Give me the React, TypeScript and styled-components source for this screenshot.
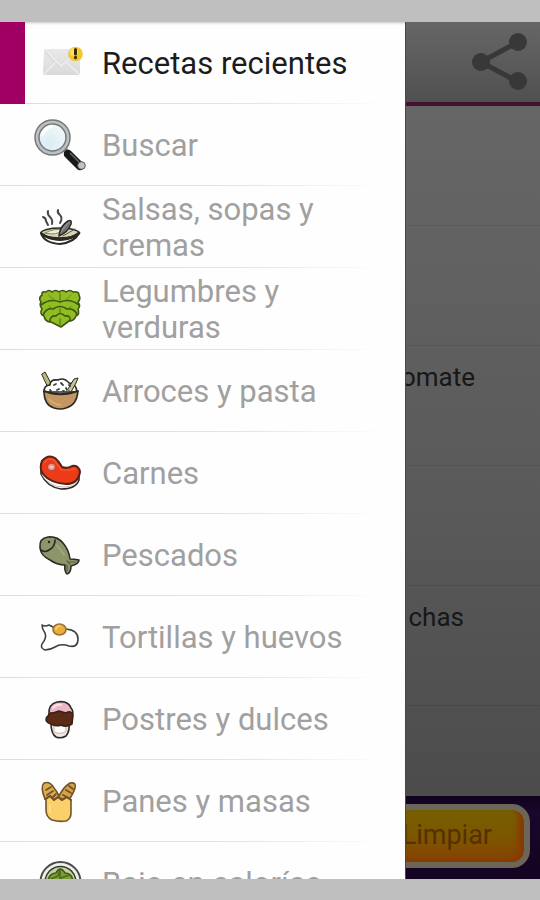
import React from "react";
import styled, { createGlobalStyle, css } from "styled-components";

const GlobalStyle = createGlobalStyle`
  * { box-sizing: border-box; }
  body { margin: 0; background: #bfbfbf; }
`;

const Screen = styled.div`
  display: flex;
  height: 100vh;
  padding: 22px 0 21px;
  overflow: hidden;
  background: #bfbfbf;
  font-family: Roboto, "Liberation Sans", sans-serif;
`;

const Drawer = styled.nav`
  flex: 0 0 75%;
  overflow: hidden;
  background: #fefefe;
  box-shadow: inset 0 3px 3px -2px #c4c4c4;
`;

const Menu = styled.ul`
  margin: 0;
  padding: 0;
  list-style: none;
`;

const MenuItem = styled.li<{ $active?: boolean }>`
  height: 82px;
  padding-bottom: 1px;
  background:
    linear-gradient(to right, #dedede 0%, #e4e4e4 60%, #fefefe 95%) bottom / 100% 1px no-repeat;
  ${({ $active }) =>
    $active &&
    css`
      border-left: 25px solid #a00062;
    `}
`;

const MenuButton = styled.button<{ $active?: boolean }>`
  display: flex;
  align-items: center;
  gap: 12px;
  width: 100%;
  height: 100%;
  padding: 0 24px 0 ${({ $active }) => ($active ? "5px" : "30px")};
  border: 0;
  background: none;
  color: ${({ $active }) => ($active ? "#1c1c1c" : "#a0a0a0")};
  font: 400 31px/36px Roboto, "Liberation Sans", sans-serif;
  text-align: left;
  cursor: pointer;
`;

const Label = styled.span`
  padding-top: 2px;
`;

const Icon = styled.svg`
  flex: none;
  width: 60px;
  height: 60px;
`;

const Page = styled.main`
  display: flex;
  flex: 1;
  flex-direction: column;
  min-width: 0;
  overflow: hidden;
  border-left: 1px solid #484848;
  background: linear-gradient(#666 10%, #5a5a5a 55%, #4c4c4c 90%);
`;

const Header = styled.header`
  display: flex;
  flex: none;
  align-items: center;
  justify-content: flex-end;
  height: 84px;
  padding-right: 9px;
  border-bottom: 4px solid #42122f;
  background: linear-gradient(#666, #505050);
`;

const ShareButton = styled.button`
  display: flex;
  padding: 0;
  border: 0;
  background: none;
  cursor: pointer;
`;

const Recipes = styled.ul`
  flex: 1;
  min-height: 0;
  margin: 0;
  padding: 0;
  overflow: hidden;
  list-style: none;
`;

const Recipe = styled.li<{ $inset?: number }>`
  display: flex;
  justify-content: flex-end;
  height: 120px;
  padding: 15px ${({ $inset = 0 }) => $inset}px 0 0;
  border-bottom: 1px solid rgba(0, 0, 0, 0.09);
  color: #171717;
  font-size: 26px;
  line-height: 32px;
  white-space: nowrap;
`;

const Footer = styled.footer`
  display: flex;
  flex: none;
  align-items: center;
  justify-content: flex-end;
  height: 83px;
  padding: 0 10px 3px 0;
  background: linear-gradient(#10031d, #1b062c 20%, #140320);
`;

const ClearButton = styled.button`
  flex: none;
  width: 200px;
  height: 64px;
  padding: 0 32px 2px 0;
  border: 6px solid #6b6657;
  border-radius: 18px;
  background: linear-gradient(#756000, #7c5600 50%, #874300);
  box-shadow: inset -6px -3px 5px #873c00;
  color: #553000;
  font: 400 27px/32px Roboto, "Liberation Sans", sans-serif;
  text-align: right;
  cursor: pointer;
`;

const line = {
  stroke: "#2c2a24",
  strokeWidth: 1.6,
  strokeLinecap: "round" as const,
  strokeLinejoin: "round" as const,
};

const EnvelopeArt = () => (
  <>
    <defs>
      <linearGradient id="paper" x2="0" y2="1">
        <stop stopColor="#e9e9e9" />
        <stop offset="1" stopColor="#dadada" />
      </linearGradient>
    </defs>
    <path d="M15 16H48Q50 16 50 18V40Q50 42 48 42H15Q13 42 13 40L14 18Q14 16 15 16Z" fill="url(#paper)" />
    <path d="M15 17L31 33L49 18M14 41L26 29M49 41L36 29" fill="none" stroke="#eeeeee" strokeWidth="1.5" />
    <path d="M15 18Q22 28 30 34" fill="none" stroke="#d2d2d2" />
    <circle cx="45.5" cy="21" r="7.3" fill="#f1c92c" />
    <circle cx="44" cy="19" r="4" fill="#f9df68" />
    <path d="M45.5 16.5V21M45.5 24.3V24.8" stroke="#3b2a00" strokeWidth="3" strokeLinecap="round" />
  </>
);

const MagnifierArt = () => (
  <>
    <defs>
      <radialGradient id="glass" cx=".4" cy=".7" r=".8">
        <stop stopColor="#d9edf4" />
        <stop offset="1" stopColor="#f6fafb" />
      </radialGradient>
    </defs>
    <path d="M34 34L40 40" stroke="#77797a" strokeWidth="5" />
    <path d="M38 39L50 51" stroke="#171919" strokeWidth="8.5" strokeLinecap="round" />
    <path d="M40 38L49 47" stroke="#626566" strokeWidth="1.6" />
    <circle cx="51.5" cy="50.5" r="3.8" fill="#bfc3c3" stroke="#555" />
    <circle cx="22.5" cy="22.5" r="15.5" fill="url(#glass)" stroke="#757879" strokeWidth="5.5" />
    <circle cx="22.5" cy="22.5" r="15.5" fill="none" stroke="#bdc0c1" strokeWidth="2.6" />
    <path d="M12 21Q14 13 22 11" fill="none" stroke="#fff" strokeWidth="3" />
  </>
);

const SoupArt = () => (
  <g {...line}>
    <path d="M13 20Q16 21 16 24Q17 26 18 28M18 14Q17 17 20 20Q23 23 22 27M28 13Q27 16 30 18Q33 21 30 26" fill="none" stroke="#45484a" strokeWidth="2" />
    <path d="M11 36Q14 46 30 47Q45 45 49 36Q43 42 30 43Q17 42 11 36Z" fill="#fff" strokeWidth="2" />
    <ellipse cx="30" cy="36" rx="19" ry="5" fill="#d6d5b5" />
    <path d="M15 36Q24 31 33 33Q27 39 15 36Z" fill="#eeeed6" stroke="#878661" strokeWidth="1" />
    <path d="M29 39Q30 29 38 24Q42 22 41 27Q38 35 29 39Z" fill="#888d8c" />
    <path d="M32 36L39 27M33 39L45 32" stroke="#535857" strokeWidth="1" />
    <path d="M12 37Q18 42 30 42Q42 42 49 36" fill="none" strokeWidth="2.8" />
  </g>
);

const LettuceArt = () => (
  <g {...line} stroke="#3d5714">
    <path
      d="M12 16Q11 12 16 13Q19 10 22 13Q26 10 29 13Q33 10 36 13Q40 10 43 13Q49 12 49 16Q51 20 48 23Q51 27 48 30Q50 35 46 37Q44 42 39 42L31 48L27 46L21 43Q15 43 14 37Q9 35 12 30Q9 26 11 23Q8 19 12 16Z"
      fill="#91bd22"
    />
    <path d="M11 26Q20 19 30 23Q40 19 49 26M13 36Q17 28 23 30Q30 25 37 30Q45 29 47 36M20 43Q20 36 26 37Q30 32 35 37Q41 36 40 42" fill="none" />
    <path d="M30 15V21M30 30V34M30 40V46" fill="none" stroke="#5a7f19" strokeWidth="1.3" />
    <path d="M19 16Q20 19 24 20M41 16Q39 19 36 20M19 27L22 29M42 27L38 29" fill="none" stroke="#76a01a" strokeWidth="1.3" />
  </g>
);

const RiceArt = () => (
  <g {...line}>
    <path d="M12 13L15 11L23 26L19 28Z" fill="#b9b77b" strokeWidth="1" />
    <path d="M14 31Q14 24 20 24Q20 18 28 19Q34 16 39 22Q46 22 47 31Z" fill="#fff" />
    <path d="M38 28L44 18L48 17L46 22L41 31Z" fill="#c5c591" strokeWidth="1" />
    <path d="M14 30Q30 36 48 30Q47 44 36 47Q31 49 24 47Q14 44 14 30Z" fill="#c49662" />
    <path d="M14 30Q30 37 48 30" fill="none" />
    <path d="M24 24L26 23M31 22L33 24M27 29L29 28M36 27L37 29M20 29L21 30M33 30L34 30M39 24L40 25" stroke="#3f4140" strokeWidth="1.8" />
    <path d="M19 38Q23 43 31 44" fill="none" stroke="#d7ad78" />
  </g>
);

const SteakArt = () => (
  <g {...line}>
    <path d="M11 22V31Q17 44 31 46Q46 46 49 37V28L34 31Z" fill="#fff" />
    <path d="M12 18Q18 11 25 15Q29 18 32 24Q37 26 42 23Q49 22 50 29Q48 41 36 41Q20 40 13 31Q9 25 12 18Z" fill="#ed3b17" strokeWidth="2" stroke="#522119" />
    <path d="M14 20Q18 14 24 17Q28 23 32 27Q39 28 45 26" fill="none" stroke="#f8532e" strokeWidth="1.5" />
    <ellipse cx="21.5" cy="24" rx="4.3" ry="4" fill="#ef8977" stroke="#bc493a" />
    <ellipse cx="21.5" cy="24" rx="2" ry="1.6" fill="#f9c5b7" stroke="none" />
    <path d="M12 32Q19 44 34 44Q43 44 47 39" fill="none" stroke="#c7bcb5" strokeWidth="1" />
  </g>
);

const FishArt = () => (
  <g {...line}>
    <path d="M10 23Q9 13 18 12Q27 11 33 18Q39 25 40 34Q44 34 49 35Q49 39 41 41Q41 48 37 49Q34 46 35 40Q27 40 20 35Q11 31 10 23Z" fill="#8d956b" />
    <path d="M11 25Q15 28 19 25Q25 22 25 15" fill="none" strokeWidth="1.7" />
    <circle cx="19" cy="17" r="1.2" fill="#22251b" stroke="none" />
    <path d="M37 36L40 39M40 37L45 37M37 40L37 46" stroke="#565d41" strokeWidth="1.2" />
    <path d="M26 20Q31 24 34 30" fill="none" stroke="#a9af89" strokeWidth="1.2" />
  </g>
);

const EggArt = () => (
  <g {...line} stroke="#3c4042">
    <path d="M12 18Q15 20 19 18Q22 19 24 21Q31 18 36 22Q48 23 48 32Q48 41 39 39Q31 36 25 40Q20 43 15 43Q10 41 12 37Q17 31 15 26Q12 22 12 18Z" fill="#fff" />
    <ellipse cx="29.5" cy="22.5" rx="6.5" ry="5.5" fill="#edad3e" stroke="#986f2e" />
    <path d="M26 22Q27 19 30 19" fill="none" stroke="#ffd176" strokeWidth="1.7" />
  </g>
);

const IceCreamArt = () => (
  <g {...line}>
    <path d="M21 34Q21 45 26 48Q31 50 36 47Q40 42 39 34Z" fill="#f3e5df" />
    <path d="M24 36V43Q31 46 36 42V36" fill="#fff" stroke="#c5b3ad" strokeWidth="1" />
    <path d="M19 26Q18 15 27 13Q38 11 41 19Q44 22 42 28Z" fill="#edb6c8" />
    <path d="M18 27Q20 23 23 24L29 22L36 24Q41 21 43 26L42 35Q36 39 31 36Q27 38 21 35Q17 34 16 31Q16 28 18 27Z" fill="#5c2b17" stroke="#3b2116" />
    <path d="M23 19Q26 15 31 16" fill="none" stroke="#ffe1e8" strokeWidth="2" />
  </g>
);

const BreadArt = () => (
  <g {...line} stroke="#72542a">
    <path d="M15 28Q10 16 14 12Q20 10 24 17Q29 23 30 29Z" fill="#deac4d" />
    <path d="M28 27Q33 16 40 12Q47 11 45 17Q44 21 39 29Z" fill="#d5a344" />
    <path d="M16 19L21 16M17 24L23 20M22 27L26 23M33 24L37 26M36 19L41 22M39 15L43 18" strokeWidth="1.8" />
    <path d="M16 28L20 25L24 29L28 26L32 29L37 26L41 29L41 42Q41 48 36 50Q29 51 22 49Q16 46 16 39Z" fill="#fbcf69" />
    <path d="M15 28L20 25L24 29L28 26L32 29L37 26L41 29" fill="none" strokeWidth="2" />
    <path d="M20 34V41" stroke="#ffe393" />
  </g>
);

const SaladArt = () => (
  <g {...line}>
    <circle cx="30.5" cy="29" r="20" fill="#eef0eb" stroke="#4b4e4a" strokeWidth="2" />
    <circle cx="30.5" cy="29" r="15.5" fill="#c4d29c" stroke="#353a32" />
    <path d="M18 27Q20 20 26 20Q30 12 35 20Q42 20 43 28Q41 37 31 39Q20 36 18 27Z" fill="#7b9e32" stroke="#405421" />
    <path d="M21 26L28 23L30 17V29M31 25L39 22M25 28L22 31M33 28L40 30" fill="none" stroke="#4d6a22" />
  </g>
);

const sections: { label: string; Art: React.FC; active?: boolean }[] = [
  { label: "Recetas recientes", Art: EnvelopeArt, active: true },
  { label: "Buscar", Art: MagnifierArt },
  { label: "Salsas, sopas y cremas", Art: SoupArt },
  { label: "Legumbres y verduras", Art: LettuceArt },
  { label: "Arroces y pasta", Art: RiceArt },
  { label: "Carnes", Art: SteakArt },
  { label: "Pescados", Art: FishArt },
  { label: "Tortillas y huevos", Art: EggArt },
  { label: "Postres y dulces", Art: IceCreamArt },
  { label: "Panes y masas", Art: BreadArt },
  { label: "Bajo en calorías", Art: SaladArt },
];

const recipes: { name: string; inset?: number }[] = [
  { name: "" },
  { name: "" },
  { name: "omate", inset: 65 },
  { name: "" },
  { name: "chas", inset: 76 },
  { name: "" },
];

export default function App() {
  return (
    <>
      <GlobalStyle />
      <Screen>
        <Drawer aria-label="Categorías">
          <Menu>
            {sections.map(({ label, Art, active }) => (
              <MenuItem key={label} $active={active}>
                <MenuButton type="button" $active={active} aria-current={active ? "page" : undefined}>
                  <Icon viewBox="0 0 60 60" aria-hidden="true">
                    <Art />
                  </Icon>
                  <Label>{label}</Label>
                </MenuButton>
              </MenuItem>
            ))}
          </Menu>
        </Drawer>
        <Page>
          <Header>
            <ShareButton type="button" aria-label="Compartir">
              <svg width="60" height="60" viewBox="0 0 60 60" aria-hidden="true">
                <path d="M47 10L10 30L47 50" fill="none" stroke="#383838" strokeWidth="5" />
                <circle cx="47" cy="10" r="9" fill="#383838" />
                <circle cx="10" cy="30" r="9" fill="#383838" />
                <circle cx="47" cy="49" r="9" fill="#383838" />
              </svg>
            </ShareButton>
          </Header>
          <Recipes>
            {recipes.map(({ name, inset }, index) => (
              <Recipe key={index} $inset={inset}>
                {name}
              </Recipe>
            ))}
          </Recipes>
          <Footer>
            <ClearButton type="button">Limpiar</ClearButton>
          </Footer>
        </Page>
      </Screen>
    </>
  );
}
